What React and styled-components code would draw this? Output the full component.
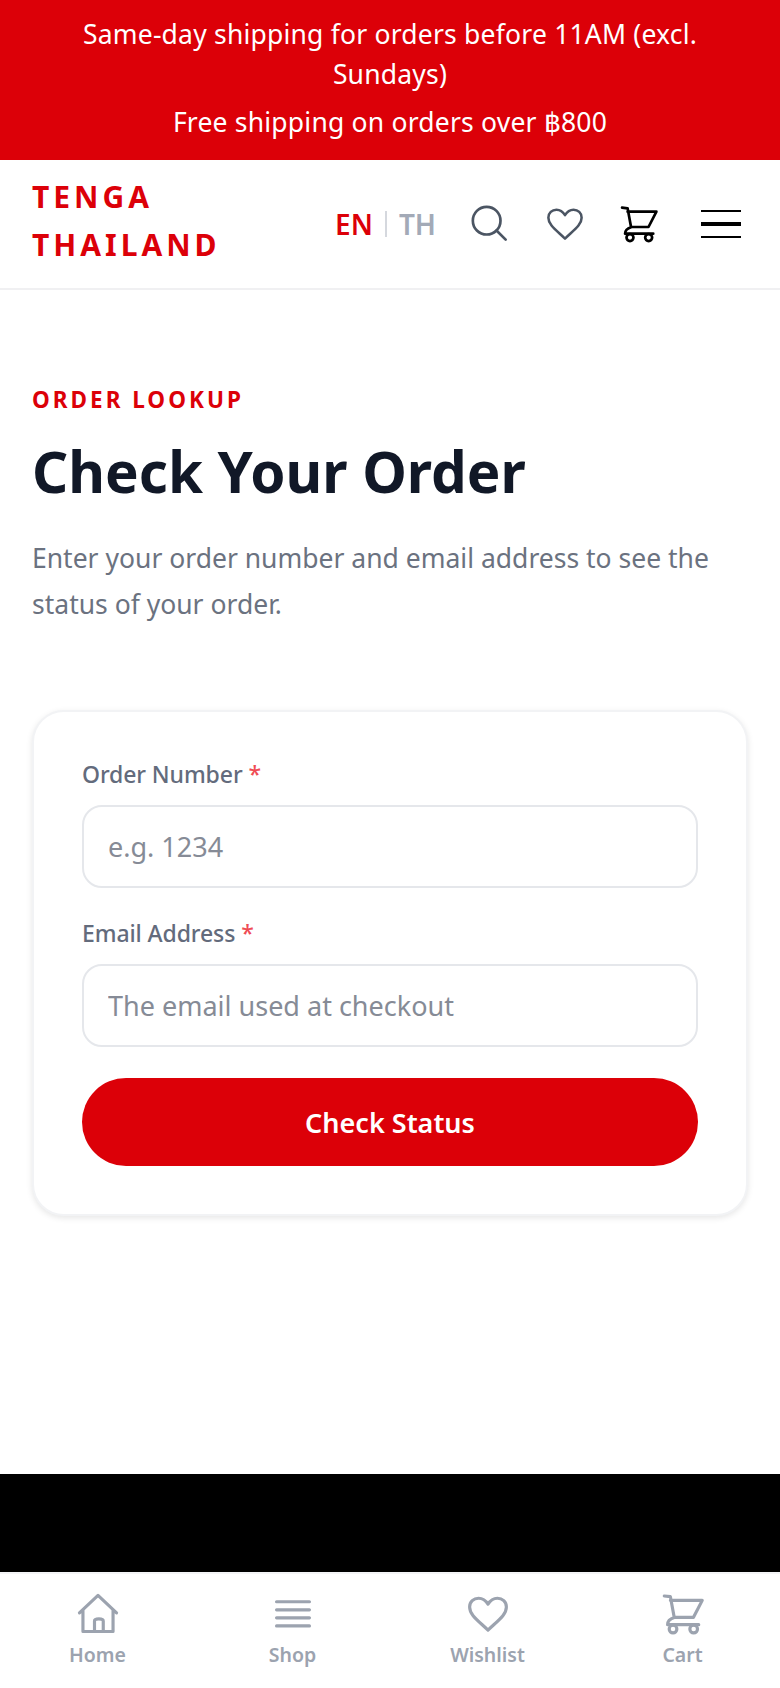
import styled, { createGlobalStyle } from "styled-components"

const GlobalStyle = createGlobalStyle`
  html, body { margin: 0; padding: 0; background: #fff; }
  body { font-family: "Noto Sans", "Open Sans", sans-serif; }
  * { box-sizing: border-box; }
  input::placeholder { color: #868b96; opacity: 1; }
`

const Page = styled.div`
  width: 780px;
  height: 1688px;
  display: flex;
  flex-direction: column;
  overflow: hidden;
`

const Banner = styled.div`
  height: 160px;
  background: #dc0008;
  color: #fff;
  font-size: 26.5px;
  line-height: 40px;
  letter-spacing: 0.2px;
  text-align: center;
  padding: 14px 30px 0;
`

const BannerLine = styled.p`
  margin: 0 0 8px;
`

const Header = styled.header`
  height: 130px;
  border-bottom: 2px solid #f0f0f2;
  padding: 0 39px 0 32px;
  display: flex;
  align-items: center;
  justify-content: space-between;
`

const Logo = styled.div`
  width: 210px;
  padding-bottom: 7px;
  color: #dc0008;
  font-size: 30px;
  font-weight: 700;
  line-height: 48px;
  letter-spacing: 4px;
`

const Tools = styled.div`
  display: flex;
  align-items: center;
`

const Lang = styled.div`
  display: flex;
  align-items: center;
  font-size: 28px;
  font-weight: 600;
  margin-right: 34px;
`

const LangItem = styled.span`
  color: ${(p) => (p.$active ? "#dc0008" : "#a3aab7")};
`

const LangDivider = styled.span`
  width: 2px;
  height: 26px;
  background: #d5d8de;
  margin: 0 12px;
`

const IconButton = styled.button`
  display: flex;
  padding: 0;
  border: 0;
  background: none;
  margin-right: ${(p) => p.$gap}px;
  color: ${(p) => p.$color};
`

const Burger = styled.div`
  width: 40px;
  display: flex;
  flex-direction: column;
  gap: 10px;
`

const BurgerBar = styled.span`
  height: ${(p) => p.$h}px;
  background: #000;
`

const Main = styled.main`
  flex: 1;
  padding: 95px 32px 0;
`

const Eyebrow = styled.div`
  color: #dc0008;
  font-size: 22.5px;
  font-weight: 700;
  line-height: 30px;
  letter-spacing: 3px;
`

const Title = styled.h1`
  margin: 21px 0 0;
  color: #111827;
  font-size: 56.5px;
  line-height: 72px;
  font-weight: 700;
`

const Lead = styled.p`
  margin: 27px 0 0;
  color: #6b7280;
  font-size: 26.5px;
  line-height: 46px;
`

const Card = styled.form`
  margin-top: 83px;
  height: 506px;
  padding: 45px 48px 0;
  border: 2px solid #f2f3f5;
  border-radius: 32px;
  background: #fff;
  box-shadow: 0 2px 6px rgba(0, 0, 0, 0.1);
`

const Field = styled.div`
  margin-bottom: 28px;
`

const Label = styled.label`
  display: block;
  color: #636b7c;
  font-size: 23px;
  font-weight: 500;
  letter-spacing: -0.1px;
  line-height: 34px;
  margin-bottom: 14px;
`

const Required = styled.span`
  color: #ef4c55;
`

const Input = styled.input`
  display: block;
  width: 100%;
  height: 83px;
  padding: 0 24px;
  border: 2px solid #e5e7eb;
  border-radius: 20px;
  font-family: inherit;
  font-size: 27px;
  outline: none;
`

const Submit = styled.button`
  display: block;
  width: 100%;
  height: 88px;
  margin-top: 31px;
  border: 0;
  border-radius: 44px;
  background: #dc0008;
  color: #fff;
  font-family: inherit;
  font-size: 27px;
  font-weight: 600;
`

const BlackBand = styled.div`
  height: 98px;
  background: #000;
`

const BottomNav = styled.nav`
  height: 116px;
  border-top: 2px solid #f3f4f6;
  display: grid;
  grid-template-columns: repeat(4, 1fr);
`

const NavItem = styled.a`
  display: flex;
  flex-direction: column;
  align-items: center;
  padding-top: 19px;
  color: #9ca3af;
  font-size: 19.5px;
  font-weight: 600;
  line-height: 28px;
`

const NavIcon = styled.svg`
  width: 42px;
  height: 42px;
  margin-bottom: 6px;
  display: block;
`

const strokeProps = {
  fill: "none",
  stroke: "currentColor",
  strokeLinecap: "round",
  strokeLinejoin: "round",
}

const heart =
  "M12 21.2 C6 15.5 1.5 12.5 1.5 8 C1.5 5 3.8 3 6.6 3 C9 3 10.8 4.4 12 6.4 C13.2 4.4 15 3 17.4 3 C20.2 3 22.5 5 22.5 8 C22.5 12.5 18 15.5 12 21.2 Z"

const CartShape = () => (
  <>
    <path d="M1.3 1.7 L4.8 2.1 L7 14 C5 14.6 3.2 15.6 3.2 18.1 H21 M4.8 4.2 H23 L18 13.9 H6.8" />
    <circle cx="6.3" cy="20.6" r="2.2" />
    <circle cx="18.1" cy="20.6" r="2.2" />
  </>
)

const App = () => (
  <Page>
    <GlobalStyle />
    <Banner>
      <BannerLine>Same-day shipping for orders before 11AM (excl. Sundays)</BannerLine>
      <BannerLine>Free shipping on orders over ฿800</BannerLine>
    </Banner>
    <Header>
      <Logo>TENGA THAILAND</Logo>
      <Tools>
        <Lang>
          <LangItem $active>EN</LangItem>
          <LangDivider />
          <LangItem>TH</LangItem>
        </Lang>
        <IconButton $gap={36} $color="#4b5563">
          <svg width="40" height="40" viewBox="0 0 24 24" {...strokeProps} strokeWidth="1.6">
            <circle cx="10" cy="10" r="8.3" />
            <path d="M15.9 15.9 L21.4 21.4" />
          </svg>
        </IconButton>
        <IconButton $gap={36} $color="#4b5563">
          <svg width="38" height="38" viewBox="0 0 24 24" {...strokeProps} strokeWidth="1.6">
            <path d={heart} />
          </svg>
        </IconButton>
        <IconButton $gap={43} $color="#000">
          <svg width="38" height="38" viewBox="0 0 24 24" {...strokeProps} strokeWidth="1.7">
            <CartShape />
          </svg>
        </IconButton>
        <Burger>
          <BurgerBar $h={2} />
          <BurgerBar $h={4} />
          <BurgerBar $h={2} />
        </Burger>
      </Tools>
    </Header>
    <Main>
      <Eyebrow>ORDER LOOKUP</Eyebrow>
      <Title>Check Your Order</Title>
      <Lead>Enter your order number and email address to see the status of your order.</Lead>
      <Card>
        <Field>
          <Label>Order Number <Required>*</Required></Label>
          <Input placeholder="e.g. 1234" />
        </Field>
        <Field>
          <Label>Email Address <Required>*</Required></Label>
          <Input placeholder="The email used at checkout" />
        </Field>
        <Submit type="button">Check Status</Submit>
      </Card>
    </Main>
    <BlackBand />
    <BottomNav>
      <NavItem>
        <NavIcon viewBox="0 0 24 24" {...strokeProps} strokeWidth="1.8">
          <path d="M1.4 11.4 L12 1.4 L22.6 11.4 M3.4 9.6 V22 H20.6 V9.6 M10 22 V16 Q10 14.8 12.5 14.8 Q15 14.8 15 16 V22" />
        </NavIcon>
        Home
      </NavItem>
      <NavItem>
        <NavIcon viewBox="0 0 24 24" {...strokeProps} strokeWidth="1.8">
          <path d="M2.6 5 H21.4 M2.6 9.6 H21.4 M2.6 14.2 H21.4 M2.6 18.8 H21.4" />
        </NavIcon>
        Shop
      </NavItem>
      <NavItem>
        <NavIcon viewBox="0 0 24 24" {...strokeProps} strokeWidth="1.8">
          <path d={heart} />
        </NavIcon>
        Wishlist
      </NavItem>
      <NavItem>
        <NavIcon viewBox="0 0 24 24" {...strokeProps} strokeWidth="1.8">
          <CartShape />
        </NavIcon>
        Cart
      </NavItem>
    </BottomNav>
  </Page>
)

export default App
